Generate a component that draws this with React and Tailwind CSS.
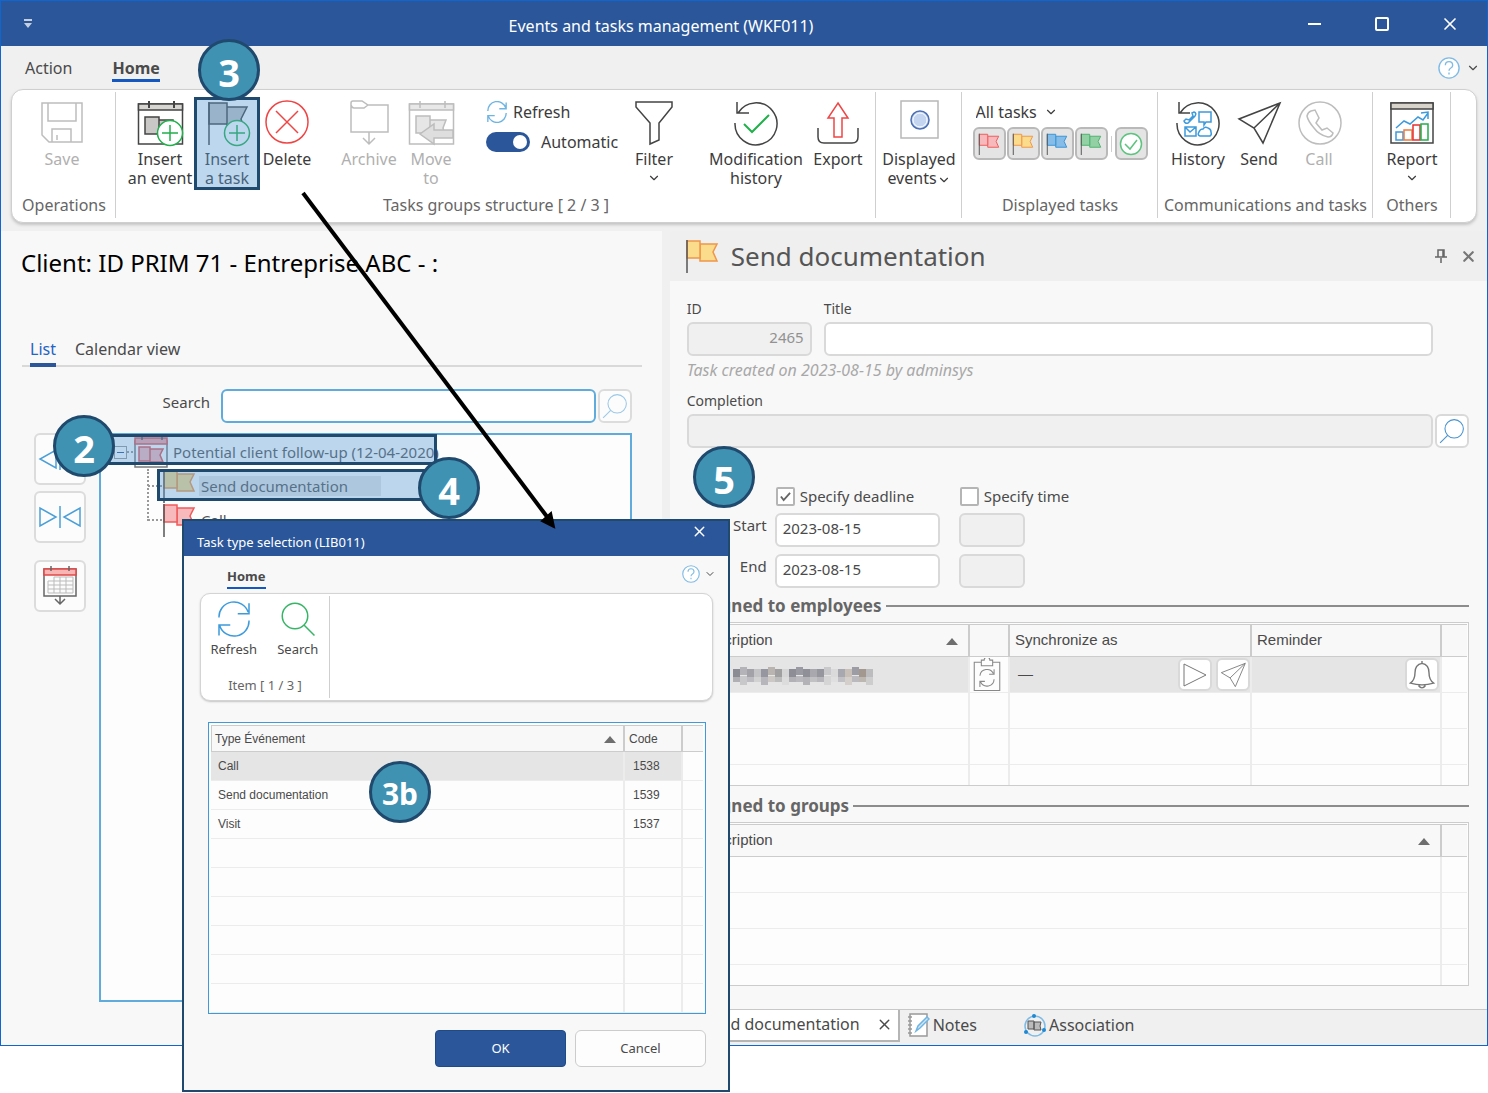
import React from "react";
import { ChevronDown, X } from "lucide-react";

const flagColors = {
  red: { stroke: "#ef5b5b", fill: "#f7b9bb" },
  yellow: { stroke: "#f0964a", fill: "#fbdb8c" },
  blue: { stroke: "#3a94d6", fill: "#85bce8" },
  green: { stroke: "#4db36f", fill: "#93d0a4" },
};

const Flag = ({ color, className }) => (
  <svg viewBox="0 0 34 34" fill={flagColors[color].fill} stroke={flagColors[color].stroke} strokeWidth="1.5" className={className}>
    <path d="M15 5h17l-4 8 4 9H15z" />
    <path d="M2 2h13v17H2z" />
    <path d="M2 1v33" stroke="#555" />
  </svg>
);

const Svg = ({ children, className = "size-12", stroke = "#444" }) => (
  <svg viewBox="0 0 48 48" fill="none" stroke={stroke} strokeWidth="1.5" className={className}>
    {children}
  </svg>
);

const PlusBadge = () => (
  <g stroke="#22b04c">
    <circle cx="34" cy="34" r="12.5" fill="#fff" />
    <path d="M34 26v16M26 34h16" />
  </g>
);

const SaveIcon = () => (
  <Svg stroke="#bdbdbd">
    <path d="M4 4h40v39H11l-7-7z" />
    <path d="M10 4v18h28V4M14 43V30h19v13M19 36v5" />
  </Svg>
);

const InsertEventIcon = () => (
  <Svg>
    <path d="M2.5 5h44v40h-44z" />
    <path d="M2.5 5h44v6h-44z" fill="#d8d6d2" />
    <path d="M13 2v7M38 2v7" strokeWidth="2" />
    <path d="M9 18h14v17H9zM23 21h14v17H23z" fill="#c9c8c6" />
    <PlusBadge />
  </Svg>
);

const InsertTaskIcon = () => (
  <Svg>
    <path d="M24 8h20l-6 12 2 6H24zM6 4h18v21H6z" fill="#c4c4c4" />
    <path d="M6 3v43" />
    <PlusBadge />
  </Svg>
);

const DeleteIcon = () => (
  <Svg stroke="#f04545">
    <circle cx="24" cy="23" r="21" />
    <path d="M13 12l22 22M35 12L13 34" />
  </Svg>
);

const ArchiveIcon = () => (
  <Svg stroke="#bdbdbd">
    <path d="M6 6V4q0-2 2-2h9l6 4h20v27H6V6q1 3 3 3h10l4-3" />
    <path d="M24 33v12M18 39l6 6 6-6" />
  </Svg>
);

const MoveToIcon = () => (
  <Svg stroke="#bdbdbd">
    <path d="M2.5 5h44v40h-44z" />
    <path d="M2.5 5h44v6h-44z" fill="#e8e8e8" />
    <path d="M13 2v7M38 2v7" />
    <path d="M23 21h16l-3 8 2 8H23zM9 17h14v17H9z" fill="#e6e6e6" />
    <path d="M46 31v8H27v6L13 35l14-10v6z" fill="#dedede" />
  </Svg>
);

const RefreshIcon = ({ className, stroke = "#3d9bdc", strokeWidth = 2 }) => (
  <svg viewBox="0 0 48 48" fill="none" stroke={stroke} strokeWidth={strokeWidth} className={className}>
    <path d="M4 22A20 20 0 0 1 43 15M44 3v14H29" />
    <path d="M44 26A20 20 0 0 1 5 33M4 46V32h15" />
  </svg>
);

const FilterIcon = () => (
  <Svg>
    <path d="M6 3h36v5L29 24v17l-9 4V24L6 8z" />
  </Svg>
);

const ModificationIcon = () => (
  <Svg>
    <path d="M3 24A21 21 0 1 0 6 14M5 3v11h12" />
    <path d="M12 25l8 8 17-17" stroke="#22b04c" strokeWidth="2" />
  </Svg>
);

const ExportIcon = () => (
  <Svg>
    <path d="M4 29v9q0 6 6 6h28q6 0 6-6v-9" />
    <path d="M24 4l10 15h-6v19h-8V19h-6z" stroke="#f04545" />
  </Svg>
);

const DisplayedEventsIcon = () => (
  <Svg stroke="#b8b8b8">
    <path d="M6 2h37v37H6z" />
    <circle cx="25" cy="21" r="9" stroke="#4a6fb5" fill="#c3d5f0" />
    <circle cx="25" cy="21" r="7" stroke="#fff" strokeWidth="1" />
  </Svg>
);

const HistoryIcon = () => (
  <Svg>
    <path d="M3 24A21 21 0 1 0 6 14M5 3v11h11" />
    <g stroke="#3d9bdc">
      <path d="M25 13h12v10h-5l-2 3v-3h-5z" />
      <path d="M20 13q3 1 1 4l-7 7q-3 1-4-2l2-2 3 1 4-4-1-3z" />
      <path d="M11 28h11v9H11zM11 28l5 5 6-5" />
      <path d="M26 37q-3-1-1-4 1-3 4-3 2-3 5-1 3 1 3 4 1 3-1 4z" />
    </g>
  </Svg>
);

const SendIcon = ({ className, stroke }) => (
  <Svg className={className} stroke={stroke}>
    <path d="M45 4L4 20l15 9 9 15zM45 4L19 29" />
  </Svg>
);

const CallIcon = () => (
  <Svg stroke="#bdbdbd">
    <circle cx="25" cy="24" r="21" />
    <path d="M16 12l4-1 4 8-3 5 6 7 5-2 6 5q-1 4-5 4-9-2-14-9-6-7-7-12 1-4 4-5z" />
  </Svg>
);

const ReportIcon = () => (
  <Svg>
    <path d="M3 4h42v40H3z" />
    <path d="M3 4h42v6H3z" fill="#d8d4cc" />
    <path d="M8 33h7v8H8z" stroke="#3d9bdc" />
    <path d="M16 31h8v10h-8z" stroke="#f07a3c" />
    <path d="M25 26h7v15h-7z" stroke="#e83030" />
    <path d="M33 25h7v16h-7z" stroke="#22b04c" />
    <path d="M8 29l8-7 6 3 8-7 5 3 5-7M33 14l7-1v7" stroke="#3d9bdc" />
  </Svg>
);

const SearchIcon = ({ className, stroke = "#4a94d0", flip }) => (
  <Svg className={className} stroke={stroke}>
    <g transform={flip ? "translate(48 0) scale(-1 1)" : undefined} strokeWidth="2">
      <circle cx="20" cy="20" r="17" />
      <path d="M32 32l14 14" />
    </g>
  </Svg>
);

const CalendarFlagIcon = () => (
  <svg viewBox="0 0 36 34" fill="none" stroke="#777" strokeWidth="1.5" className="h-[34px] w-9 shrink-0">
    <path d="M2 6h32v26H2z" fill="#fff" />
    <path d="M2 3h32v6H2z" fill="#f4a6a8" stroke="#e25555" />
    <path d="M9 0v5M29 0v5" stroke="#555" />
    <path d="M17 14h13l-3 6 3 7H17zM6 12h11v14H6z" fill="#f7b9bb" stroke="#e25555" />
  </svg>
);

const CalendarDownIcon = () => (
  <svg viewBox="0 0 36 42" fill="none" stroke="#666" strokeWidth="1.5" className="h-[42px] w-9">
    <path d="M2 4h32v27H2z" />
    <path d="M2 4h32v6H2z" fill="#f9b4b4" stroke="#e04848" />
    <path d="M9 1v5M27 1v5" />
    <path d="M6 16h25M6 20h25M6 24h25M6 28h25M6 16v12M12 12v16M18 12v16M24 12v16M31 12v16M12 12h19" stroke="#bbb" strokeWidth="1" />
    <path d="M18 31v8M13 34l5 5 5-5" />
  </svg>
);

const HelpIcon = ({ className }) => (
  <svg viewBox="0 0 24 24" fill="none" stroke="#7fbbe4" strokeWidth="1.5" className={className}>
    <circle cx="12" cy="12" r="11" fill="#fff" />
    <path d="M8 9q0-4 4-4t4 4q0 2-2 3t-2 3M12 17v2" />
  </svg>
);

const RibbonButton = ({ icon, label, secondLine, width, disabled, chevron, children }) => (
  <button disabled={disabled} className={`relative flex shrink-0 flex-col items-center text-base leading-[19px] ${width} ${disabled ? "text-[#b0b0b0]" : "text-[#3c3c3c]"}`}>
    {icon}
    <span className="mt-[3px] whitespace-nowrap">
      {label}
      {secondLine && <br />}
      {secondLine}
      {chevron === "inline" && <ChevronDown size={14} className="inline" />}
    </span>
    {chevron === "below" && <ChevronDown size={14} className="mt-[2px]" />}
    {children}
  </button>
);

const RibbonGroup = ({ label, width, align = "justify-center", children }) => (
  <section aria-label={label} className={`relative flex shrink-0 flex-col justify-between pt-[9px] pb-[7px] ${width} after:absolute after:top-[2px] after:right-0 after:bottom-1 after:w-px after:bg-[#cfcfcf]`}>
    <div className={`flex items-start ${align}`}>{children}</div>
    <div className="text-center text-base leading-5 whitespace-nowrap text-[#666]">{label}</div>
  </section>
);

const Ribbon = () => (
  <div className="mx-[10px] mb-2 flex h-[134px] rounded-xl border border-[#cfcfcf] bg-white shadow-[0_2px_3px_#c4c4c4]">
    <RibbonGroup label="Operations" width="w-[104px]" align="justify-start pl-4">
      <RibbonButton icon={<SaveIcon />} label="Save" width="w-[68px]" disabled />
    </RibbonGroup>
    <RibbonGroup label="Tasks groups structure [ 2 / 3 ]" width="w-[760px]">
      <RibbonButton icon={<InsertEventIcon />} label="Insert" secondLine="an event" width="w-[68px]" />
      <RibbonButton icon={<InsertTaskIcon />} label="Insert" secondLine="a task" width="w-[66px]">
        <span className="absolute inset-x-0 -top-[2px] -bottom-[2px] border-[3px] border-[#1f4a6d] bg-[#5b9bd5]/40"></span>
      </RibbonButton>
      <RibbonButton icon={<DeleteIcon />} label="Delete" width="w-[54px]" />
      <div className="ml-[25px] flex gap-[2px]">
        <RibbonButton icon={<ArchiveIcon />} label="Archive" width="w-[60px]" disabled />
        <RibbonButton icon={<MoveToIcon />} label="Move" secondLine="to" width="w-[60px]" disabled />
      </div>
      <div className="ml-[25px] flex w-[138px] flex-col gap-2 pt-[2px] text-base leading-[22px] text-[#3c3c3c]">
        <button className="flex items-center gap-[5px]">
          <RefreshIcon className="size-[22px]" stroke="#6fb5e3" strokeWidth={3} />
          Refresh
        </button>
        <label className="flex items-center gap-[11px]">
          <input
            type="checkbox"
            role="switch"
            defaultChecked
            className="relative h-5 w-11 appearance-none rounded-full bg-[#2b579a] before:absolute before:top-[3px] before:right-[3px] before:size-[14px] before:rounded-full before:bg-white"
          />
          Automatic
        </label>
      </div>
      <RibbonButton icon={<FilterIcon />} label="Filter" width="w-[60px]" chevron="below" />
      <div className="ml-[18px] flex">
        <RibbonButton icon={<ModificationIcon />} label="Modification" secondLine="history" width="w-[108px]" />
        <RibbonButton icon={<ExportIcon />} label="Export" width="w-[56px]" />
      </div>
    </RibbonGroup>
    <RibbonGroup label="" width="w-[86px]">
      <RibbonButton icon={<DisplayedEventsIcon />} label="Displayed" secondLine="events" width="w-[80px]" chevron="inline" />
    </RibbonGroup>
    <RibbonGroup label="Displayed tasks" width="w-[196px]">
      <div className="flex flex-col gap-1 pt-[2px]">
        <div className="flex items-center pl-[3px] text-[#3c3c3c]">
          <select aria-label="Displayed tasks filter" className="w-[68px] appearance-none text-base leading-[22px]">
            <option>All tasks</option>
          </select>
          <ChevronDown size={14} />
        </div>
        <div className="flex items-center gap-px">
          {["red", "yellow", "blue", "green"].map((color) => (
            <button key={color} aria-label={`${color} tasks`} aria-pressed="true" className="grid size-[33px] place-items-center rounded-md border-2 border-[#b9b9b9] bg-[#e4e4e4]">
              <Flag color={color} className="size-[22px]" />
            </button>
          ))}
          <span className="mx-[2px] h-4 w-px bg-[#cfcfcf]"></span>
          <button aria-label="Completed tasks" aria-pressed="true" className="grid size-[33px] place-items-center rounded-md border-2 border-[#b9b9b9] bg-[#e4e4e4]">
            <svg viewBox="0 0 24 24" fill="none" stroke="#5cc47e" strokeWidth="1.5" className="size-6">
              <circle cx="12" cy="12" r="10.5" fill="#fff" />
              <path d="M6 12l5 5 7-9" />
            </svg>
          </button>
        </div>
      </div>
    </RibbonGroup>
    <RibbonGroup label="Communications and tasks" width="w-[215px]" align="justify-start pl-[9px]">
      <RibbonButton icon={<HistoryIcon />} label="History" width="w-[62px]" />
      <RibbonButton icon={<SendIcon />} label="Send" width="w-[60px]" />
      <RibbonButton icon={<CallIcon />} label="Call" width="w-[60px]" disabled />
    </RibbonGroup>
    <RibbonGroup label="Others" width="w-[78px]">
      <RibbonButton icon={<ReportIcon />} label="Report" width="w-[60px]" chevron="below" />
    </RibbonGroup>
  </div>
);

const TitleBar = () => (
  <header className="flex h-[45px] items-center bg-[#2b579a] pr-[3px] text-white">
    <button aria-label="Customize quick access" className="flex w-[41px] justify-end pr-[9px]">
      <svg viewBox="0 0 10 10" className="size-[10px] fill-[#c5cfe0]">
        <path d="M1 0h8v2H1zM1 4h8L5 9z" />
      </svg>
    </button>
    <h1 className="flex-1 pt-1 text-center text-base">Events and tasks management (WKF011)</h1>
    <button aria-label="Minimize" className="grid w-[68px] place-items-center">
      <span className="h-[2px] w-[13px] bg-white"></span>
    </button>
    <button aria-label="Maximize" className="grid w-[68px] place-items-center">
      <span className="size-[14px] rounded-xs border-2 border-white"></span>
    </button>
    <button aria-label="Close" className="grid w-[68px] place-items-center">
      <X size={20} strokeWidth={2} />
    </button>
  </header>
);

const fieldClass = "h-[34px] rounded-md border-2 border-[#d9d9d9] bg-white px-[6px] pb-1 text-[15px]";
const readOnlyClass = "h-[34px] rounded-md border-2 border-[#d9d9d9] bg-[#f0f0f0] px-[6px] pb-1 text-[15px] text-[#929292]";
const sideButtonClass = "grid h-[52px] w-full place-items-center rounded-md border-2 border-[#dcdcdc] bg-[#fcfcfc]";

const ListPane = () => (
  <main className="flex w-[45%] shrink-0 flex-col border-r-8 border-[#f0f0f0] bg-[#f8f8f8]">
    <h2 className="px-5 pt-4 text-2xl leading-8 text-black">Client: ID PRIM 71 - Entreprise ABC - :</h2>
    <nav className="mt-[57px] mr-5 ml-[21px] flex h-[31px] items-start gap-[19px] border-b-2 border-[#d9d9d9] px-2 text-base leading-[27px]">
      <button className="border-b-4 border-[#2b579a] text-[#2563c4]">List</button>
      <button>Calendar view</button>
    </nav>
    <div className="mt-[22px] mr-[30px] flex">
      <label htmlFor="tree-search" className="w-[220px] pt-[2px] pr-[11px] text-right text-[15px]">Search</label>
      <input id="tree-search" type="text" className="h-[34px] min-w-0 flex-1 rounded-md border-2 border-[#5fabdc] bg-white px-2" />
      <button aria-label="Search" className="ml-[2px] grid size-[34px] place-items-center rounded-md border-2 border-[#dcdcdc] bg-[#fcfcfc]">
        <SearchIcon className="size-[26px]" stroke="#9cc8e8" flip />
      </button>
    </div>
    <div className="mt-[10px] mr-[30px] mb-[43px] ml-[33px] flex flex-1 gap-[13px]">
      <div className="flex w-[52px] flex-col gap-[6px]">
        <button aria-label="Expand all" className={sideButtonClass}>
          <svg viewBox="0 0 44 24" fill="none" stroke="#4a9fd8" strokeWidth="1.5" className="h-6 w-11">
            <path d="M18 3v18L2 12zM22 1v22M26 3v18l16-9z" />
          </svg>
        </button>
        <button aria-label="Collapse all" className={sideButtonClass}>
          <svg viewBox="0 0 44 24" fill="none" stroke="#4a9fd8" strokeWidth="1.5" className="h-6 w-11">
            <path d="M2 3v18l16-9zM22 1v22M42 3v18l-16-9z" />
          </svg>
        </button>
        <button aria-label="Send to calendar" className={`${sideButtonClass} mt-[11px]`}>
          <CalendarDownIcon />
        </button>
      </div>
      <ul role="tree" aria-label="Tasks" className="flex-1 border-2 border-[#5fabdc] bg-[#fdfdfd] text-[15px] text-[#555]">
        <li role="treeitem" aria-expanded="true">
          <div className="relative flex h-[34px] items-center pl-[13px]">
            <span className="grid size-[13px] place-items-center border border-[#999] bg-white">
              <span className="h-px w-[7px] bg-[#2b579a]"></span>
            </span>
            <span className="w-[6px] border-t-2 border-dotted border-[#999]"></span>
            <CalendarFlagIcon />
            <span className="pl-1 whitespace-nowrap">Potential client follow-up (12-04-2020)</span>
            <span className="absolute -top-px left-1 h-[31px] w-[332px] border-[3px] border-[#1f4a6d] bg-[#5b9bd5]/40"></span>
          </div>
          <ul role="group" className="relative pl-[47px] before:absolute before:top-0 before:left-[46px] before:h-[52px] before:border-l-2 before:border-dotted before:border-[#999]">
            <li role="treeitem" className="relative flex h-[34px] items-center">
              <span className="w-[14px] border-t-2 border-dotted border-[#999]"></span>
              <Flag color="yellow" className="size-[34px]" />
              <span className="ml-[3px] w-[182px] bg-[#e5e5e5] pl-[2px] leading-5">Send documentation</span>
              <span className="absolute top-0 left-[9px] h-[32px] w-[290px] border-[3px] border-[#1f4a6d] bg-[#5b9bd5]/40"></span>
            </li>
            <li role="treeitem" className="flex h-[34px] items-center">
              <span className="w-[14px] border-t-2 border-dotted border-[#999]"></span>
              <Flag color="red" className="size-[34px]" />
              <span className="pl-[5px]">Call</span>
            </li>
          </ul>
        </li>
      </ul>
    </div>
  </main>
);

const CheckField = ({ label, checked, className = "" }) => (
  <label className={`relative flex items-center gap-[5px] leading-5 ${className}`}>
    <input type="checkbox" defaultChecked={checked} className="size-[19px] appearance-none rounded-xs border-2 border-[#b5b5b5] bg-white" />
    {checked && (
      <svg viewBox="0 0 12 12" fill="none" stroke="#666" strokeWidth="2" className="pointer-events-none absolute left-1 size-[11px]">
        <path d="M1 6l3 4 7-8" />
      </svg>
    )}
    {label}
  </label>
);

const DateRow = ({ label, id }) => (
  <div className="mt-[7px] flex text-[15px]">
    <label htmlFor={id} className="w-[88px] pt-px pr-2 text-right">{label}</label>
    <input id={id} type="text" defaultValue="2023-08-15" className={`${fieldClass} w-[165px]`} />
    <input aria-label={`${label} time`} type="text" disabled className={`${readOnlyClass} ml-[19px] w-[66px]`} />
  </div>
);

const SectionTitle = ({ children }) => (
  <div className="flex items-center gap-1 text-[17px] leading-5 font-bold text-[#666]">
    <h3>{children}</h3>
    <span className="h-[2px] flex-1 bg-[#8c8c8c]"></span>
  </div>
);

const SortArrow = () => (
  <svg viewBox="0 0 12 8" className="h-2 w-3 shrink-0 fill-[#6e6e6e]">
    <path d="M0 8l6-7 6 7z" />
  </svg>
);

const headClass = "h-[33px] border-y border-r-2 border-[#cccccc] px-[5px] text-left font-normal";
const cellClass = "h-[36px] border-r-2 border-b border-[#ececec]";
const miniButtonClass = "grid h-[33px] w-[34px] place-items-center rounded-md border-2 border-[#d9d9d9] bg-white";

// Unreadable employee name, drawn as a coarse mosaic
const mosaic = [
  "#8b8b93", "#b4b4b8", "#a2a2a8", "#c4c4c6", "#9696a0", "#b9b4b0", "#a0a0a0", "#d6d6d6", "#8d8d96", "#9a9aa2",
  "#8f8f98", "#a8a8ae", "#96969e", "#c9c9cc", "#dadada", "#a8a8b0", "#c8c0b8", "#9c9ca4", "#a2988f", "#bcbcbe",
];
const Mosaic = () => (
  <svg viewBox="0 0 140 22" className="h-[22px] w-[140px]">
    {mosaic.map((c, i) => (
      <g key={i} fill={c}>
        <rect x={i * 7} y={i % 4 === 1 ? 3 : 5} width="7" height="8" />
        <rect x={i * 7} y="12" width="7" height={i % 3 === 1 ? 9 : 6} opacity="0.6" />
      </g>
    ))}
  </svg>
);

const EmployeesTable = () => (
  <div className="mt-[6px] h-[164px] overflow-hidden border border-[#cccccc] bg-[#fdfdfd] p-px">
    <table className="w-full table-fixed border-separate border-spacing-0 font-['Liberation_Sans',sans-serif] text-[15px]">
      <thead className="bg-[#f8f8f8]">
        <tr>
          <th className={headClass}>
            <span className="flex items-center justify-between pr-[5px] pl-1">Description <SortArrow /></span>
          </th>
          <th aria-label="Status" className={`${headClass} w-10`}></th>
          <th className={`${headClass} w-[242px]`}>Synchronize as</th>
          <th className={`${headClass} w-[190px]`}>Reminder</th>
          <th aria-label="More" className="w-[25px] border-y border-[#cccccc]"></th>
        </tr>
      </thead>
      <tbody>
        <tr>
          <td className={`${cellClass} bg-[#e5e5e5] pl-11`}><Mosaic /></td>
          <td className={cellClass}>
            <Svg className="size-[34px]" stroke="#888">
              <path d="M16 6H6v40h36V6H32M16 3v8h16V3h-4a4 4 0 0 0-8 0z" />
              <path d="M14 25a10 10 0 0 1 19-3M34 16v7h-7M34 30a10 10 0 0 1-19 4M14 41v-8h7" />
            </Svg>
          </td>
          <td className={`${cellClass} bg-[#e5e5e5]`}>
            <div className="flex items-center gap-1 pl-2">
              <span className="flex-1">—</span>
              <button aria-label="Start" className={miniButtonClass}>
                <svg viewBox="0 0 24 24" fill="none" stroke="#777" className="size-6"><path d="M1 1l22 11L1 23z" /></svg>
              </button>
              <button aria-label="Send" className={miniButtonClass}><SendIcon className="size-[28px]" stroke="#777" /></button>
            </div>
          </td>
          <td className={`${cellClass} bg-[#e5e5e5]`}>
            <button aria-label="Reminder" className={`${miniButtonClass} mr-px ml-auto`}>
              <svg viewBox="0 0 24 24" fill="none" stroke="#777" strokeWidth="1.2" className="size-7">
                <path d="M12 2q6 1 6 8 0 6 4 9-10 3-20 0 4-3 4-9 0-7 6-8zM12 0v2M9 21q3 4 6 0" />
              </svg>
            </button>
          </td>
          <td className="border-b border-[#ececec]"></td>
        </tr>
        {[1, 2, 3].map((row) => (
          <tr key={row}>
            <td className={cellClass}></td>
            <td className={cellClass}></td>
            <td className={cellClass}></td>
            <td className={cellClass}></td>
            <td className="border-b border-[#ececec]"></td>
          </tr>
        ))}
      </tbody>
    </table>
  </div>
);

const GroupsTable = () => (
  <div className="mt-[6px] mb-[23px] min-h-0 grow basis-[160px] overflow-hidden border border-[#cccccc] bg-[#fdfdfd] p-px">
    <table className="w-full table-fixed border-separate border-spacing-0 font-['Liberation_Sans',sans-serif] text-[15px]">
      <thead className="bg-[#f8f8f8]">
        <tr>
          <th className={headClass}>
            <span className="flex items-center justify-between pr-[5px] pl-1">Description <SortArrow /></span>
          </th>
          <th aria-label="More" className="w-[25px] border-y border-[#cccccc]"></th>
        </tr>
      </thead>
      <tbody>
        {[1, 2, 3, 4].map((row) => (
          <tr key={row}>
            <td className={cellClass}></td>
            <td className="border-b border-[#ececec]"></td>
          </tr>
        ))}
      </tbody>
    </table>
  </div>
);

const DetailPane = () => (
  <aside className="flex min-w-0 flex-1 flex-col bg-[#f8f8f8]">
    <div className="flex h-[50px] items-center bg-[#efefef] pr-[10px] pl-[15px] text-[#555]">
      <Flag color="yellow" className="size-[34px]" />
      <h2 className="ml-3 flex-1 text-[26px] leading-[34px]">Send documentation</h2>
      <button aria-label="Pin">
        <svg viewBox="0 0 12 14" fill="none" stroke="#666" strokeWidth="1.5" className="h-[14px] w-3">
          <path d="M3 8V1h6v7M0 8h12M6 9v5M8 1v7" />
        </svg>
      </button>
      <button aria-label="Close panel" className="ml-[13px] text-[#777]">
        <X size={17} strokeWidth={3} />
      </button>
    </div>
    <div className="flex flex-1 flex-col pt-[18px] pr-[18px] pl-[17px]">
      <div className="mr-9 flex gap-3 text-sm leading-5">
        <label className="flex w-[125px] flex-col gap-[3px]">
          ID
          <input type="text" readOnly value="2465" className={`${readOnlyClass} text-right`} />
        </label>
        <label className="flex flex-1 flex-col gap-[3px]">
          Title
          <input type="text" className={fieldClass} />
        </label>
      </div>
      <p className="mt-1 text-base leading-5 text-[#a8a8a8] italic">Task created on 2023-08-15 by adminsys</p>
      <label htmlFor="completion" className="mt-[11px] text-sm leading-5">Completion</label>
      <div className="mt-[3px] flex gap-[2px]">
        <input id="completion" type="text" readOnly className={`${readOnlyClass} flex-1`} />
        <button aria-label="Find completion" className="grid size-[34px] place-items-center rounded-md border-2 border-[#d9d9d9] bg-white">
          <SearchIcon className="size-[26px]" flip />
        </button>
      </div>
      <div className="mt-[38px] flex pl-[89px] text-[15px]">
        <CheckField label="Specify deadline" checked className="w-[184px]" />
        <CheckField label="Specify time" />
      </div>
      <DateRow label="Start" id="start-date" />
      <DateRow label="End" id="end-date" />
      <div className="mt-2">
        <SectionTitle>Assigned to employees</SectionTitle>
      </div>
      <EmployeesTable />
      <div className="mt-[10px]">
        <SectionTitle>Assigned to groups</SectionTitle>
      </div>
      <GroupsTable />
    </div>
    <nav className="flex h-9 items-center border-t border-[#c8c8c8] bg-[#f0f0f0] text-base">
      <div className="mb-1 flex h-8 w-[230px] items-center justify-end gap-4 border-r-2 border-b-2 border-[#b5b5b5] bg-white pr-[5px]">
        <button className="pb-[2px] whitespace-nowrap">Send documentation</button>
        <button aria-label="Close tab"><X size={17} strokeWidth={2} /></button>
      </div>
      <button className="ml-2 flex items-center gap-[3px] pb-[6px]">
        <svg viewBox="0 0 22 24" fill="none" stroke="#999" strokeWidth="1.5" className="h-6 w-[22px]">
          <path d="M2 1h17v22H2z" fill="#fff" />
          <path d="M0 4h4M0 8h4M0 12h4M0 16h4M0 20h4" />
          <path d="M8 18l2-5 9-9 2 2-9 9z" stroke="#6fb5e3" fill="#cfe6f6" />
        </svg>
        Notes
      </button>
      <button className="ml-[46px] flex items-center gap-[2px] pb-[6px]">
        <svg viewBox="0 0 24 24" fill="none" stroke="#7fbbe4" strokeWidth="1.5" className="size-6">
          <circle cx="12" cy="13" r="10" />
          <path d="M5 8h6v8H5zM11 9h7l-1 4 1 4h-7z" fill="#bbb" stroke="#555" strokeWidth="1" />
          <g fill="#1e88d2" stroke="none">
            <circle cx="11" cy="3" r="2" />
            <circle cx="3" cy="19" r="2" />
            <circle cx="21" cy="17" r="2" />
          </g>
        </svg>
        Association
      </button>
    </nav>
  </aside>
);

const eventTypes = [
  { name: "Call", code: "1538" },
  { name: "Send documentation", code: "1539" },
  { name: "Visit", code: "1537" },
];

const TaskTypeDialog = () => (
  <div role="dialog" aria-labelledby="dialog-title" className="absolute top-[519px] left-[182px] flex w-[548px] flex-col border-2 border-[#1f4a6d] bg-[#f8f8f8] pb-[23px] text-[13px]">
    <div className="flex h-[35px] items-start justify-between bg-[#2b579a] pt-[2px] pr-5 pl-[13px] text-white">
      <h2 id="dialog-title" className="pt-[9px] leading-5">Task type selection (LIB011)</h2>
      <button aria-label="Close dialog"><X size={17} strokeWidth={2} /></button>
    </div>
    <div className="flex h-[37px] items-start pt-[9px] pr-3 pl-[43px]">
      <button className="border-b-2 border-[#1457c0] leading-[22px] font-bold">Home</button>
      <button aria-label="Help" className="ml-auto flex items-center gap-1">
        <HelpIcon className="size-[18px]" />
        <ChevronDown size={12} />
      </button>
    </div>
    <div className="mr-[15px] ml-4 flex h-[108px] rounded-[10px] border border-[#d4d4d4] bg-white shadow-[0_1px_2px_#c4c4c4]">
      <div className="my-[2px] flex w-[129px] flex-col justify-between border-r border-[#cfcfcf] pt-[5px] pb-[3px]">
        <div className="flex justify-center leading-[18px]">
          <button className="flex w-[66px] flex-col items-center gap-[3px]">
            <RefreshIcon className="size-9" />
            Refresh
          </button>
          <button className="flex w-[63px] flex-col items-center gap-[3px]">
            <SearchIcon className="size-9" stroke="#35b565" />
            Search
          </button>
        </div>
        <div className="text-center text-[#666]">Item [ 1 / 3 ]</div>
      </div>
    </div>
    <div className="mt-[21px] mr-[22px] ml-6 h-[292px] overflow-hidden border border-[#3d9bdc] bg-[#fdfdfd] p-[2px]">
      <table className="w-full table-fixed border-separate border-spacing-0 font-['Liberation_Sans',sans-serif] text-xs">
        <thead className="bg-[#f8f8f8]">
          <tr>
            <th className="h-[27px] border border-r-2 border-[#cccccc] px-[3px] text-left font-normal">
              <span className="flex items-center justify-between pr-1">Type Événement <SortArrow /></span>
            </th>
            <th className="w-[58px] border-y border-r-2 border-[#cccccc] px-1 text-left font-normal">Code</th>
            <th aria-label="More" className="w-5 border-y border-[#cccccc]"></th>
          </tr>
        </thead>
        <tbody>
          {eventTypes.map((type, i) => (
            <tr key={type.code} className={i === 0 ? "bg-[#e5e5e5]" : ""}>
              <td className="h-[29px] border-r-2 border-b border-[#ececec] pl-[7px]">{type.name}</td>
              <td className="border-r-2 border-b border-[#ececec] pl-2">{type.code}</td>
              <td className="border-b border-[#ececec] bg-[#fdfdfd]"></td>
            </tr>
          ))}
          {[4, 5, 6, 7, 8, 9].map((row) => (
            <tr key={row}>
              <td className="h-[29px] border-r-2 border-b border-[#ececec]"></td>
              <td className="border-r-2 border-b border-[#ececec]"></td>
              <td className="border-b border-[#ececec]"></td>
            </tr>
          ))}
        </tbody>
      </table>
    </div>
    <div className="mt-4 mr-[22px] flex justify-end gap-[9px]">
      <button className="h-[37px] w-[131px] rounded border border-[#1f4a8a] bg-[#2b579a] text-white">OK</button>
      <button className="h-[37px] w-[131px] rounded-md border border-[#cccccc] bg-[#fdfdfd]">Cancel</button>
    </div>
  </div>
);

const StepBadge = ({ place, size = "text-[38px]", children }) => (
  <span className={`absolute flex size-[62px] items-center justify-center rounded-full border-[3px] border-[#1f4a6d] bg-[#4092b3] pt-1 leading-none font-bold text-white ${place} ${size}`}>
    {children}
  </span>
);

const App = () => {
  return (
    <div className="relative flex min-h-screen flex-col bg-white pb-[47px] font-['Noto_Sans',sans-serif] text-[#4a4a4a]">
      <div className="flex flex-1 flex-col border border-[#1066d0] bg-[#f0f0f0]">
        <TitleBar />
        <nav className="flex h-[43px] items-start gap-10 pt-[11px] pr-[7px] pl-6 text-base leading-[22px]">
          <button>Action</button>
          <button className="border-b-[3px] border-[#1457c0] font-bold">Home</button>
          <button aria-label="Help" className="ml-auto flex items-center gap-[6px]">
            <HelpIcon className="size-[22px]" />
            <ChevronDown size={14} />
          </button>
        </nav>
        <Ribbon />
        <div className="flex flex-1">
          <ListPane />
          <DetailPane />
        </div>
      </div>
      <TaskTypeDialog />
      <svg viewBox="0 0 256 340" className="pointer-events-none absolute top-[190px] left-[300px] h-[340px] w-[256px]">
        <path d="M3 3l245 325" stroke="#000" strokeWidth="4" />
        <path d="M254 337l-12-6 9-8z" stroke="#000" strokeWidth="2" />
      </svg>
      <StepBadge place="top-[39px] left-[198px]">3</StepBadge>
      <StepBadge place="top-[415px] left-[53px]">2</StepBadge>
      <StepBadge place="top-[457px] left-[418px]">4</StepBadge>
      <StepBadge place="top-[446px] left-[693px]">5</StepBadge>
      <StepBadge place="top-[761px] left-[369px]" size="text-[30px]">3b</StepBadge>
    </div>
  );
};

export default App;
